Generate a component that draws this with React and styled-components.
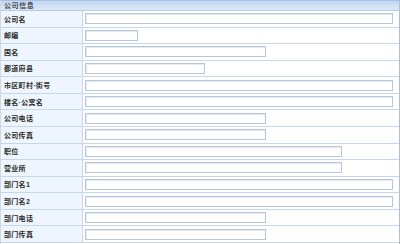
import styled, { createGlobalStyle } from "styled-components"

const GlobalStyle = createGlobalStyle`
  html, body {
    margin: 0;
    padding: 0;
    background: #ffffff;
  }
  body {
    font-family: "Liberation Sans", "Noto Sans CJK SC", sans-serif;
  }
`

const Panel = styled.div`
  width: 400px;
  height: 244px;
  box-sizing: border-box;
  border-right: 1px solid #a9bfdb;
  border-left: 1px solid #c9d9ee;
  display: grid;
  grid-template-rows: 11px repeat(14, 1fr);
  background: #fff;
  padding-bottom: 1px;
`

const Header = styled.div`
  box-sizing: border-box;
  border-top: 1px solid #a9c1e0;
  border-bottom: 1px solid #b3c9e6;
  background: linear-gradient(#c4d7f0, #dce8f7);
  font-size: 7px;
  font-weight: 500;
  line-height: 9px;
  color: #1a1a1a;
  padding-left: 3px;
  letter-spacing: 0.6px;
`

const Row = styled.div`
  display: grid;
  grid-template-columns: 82px 1fr;
  border-bottom: 1px solid #c6d6ec;
  box-sizing: border-box;
  min-height: 0;
`

const Label = styled.div`
  background: #eef5fd;
  border-right: 1px solid #c6d6ec;
  font-size: 7px;
  font-weight: 700;
  color: #2b2b2b;
  display: flex;
  align-items: center;
  padding-left: 3px;
  letter-spacing: 0.3px;
  white-space: nowrap;
`

const Cell = styled.div`
  display: flex;
  align-items: center;
  padding-left: 2px;
`

const Input = styled.input`
  box-sizing: border-box;
  width: ${(p) => p.$w}px;
  height: 11px;
  margin: 0;
  padding: 0;
  border: 1px solid #b6c7db;
  box-shadow: inset 1px 1px 0 #e3eaf3;
  background: #fff;
  outline: none;
`

const fields = [
  ["公司名", 308],
  ["邮编", 53],
  ["国名", 181],
  ["都道府县", 120],
  ["市区町村·街号", 308],
  ["楼名·公寓名", 308],
  ["公司电话", 181],
  ["公司传真", 181],
  ["职位", 257],
  ["营业所", 257],
  ["部门名1", 308],
  ["部门名2", 308],
  ["部门电话", 181],
  ["部门传真", 181],
]

const App = () => {
  return (
    <>
      <GlobalStyle />
      <Panel>
        <Header>公司信息</Header>
        {fields.map(([name, w]) => (
          <Row key={name}>
            <Label>{name}</Label>
            <Cell>
              <Input $w={w} />
            </Cell>
          </Row>
        ))}
      </Panel>
    </>
  )
}

export default App
